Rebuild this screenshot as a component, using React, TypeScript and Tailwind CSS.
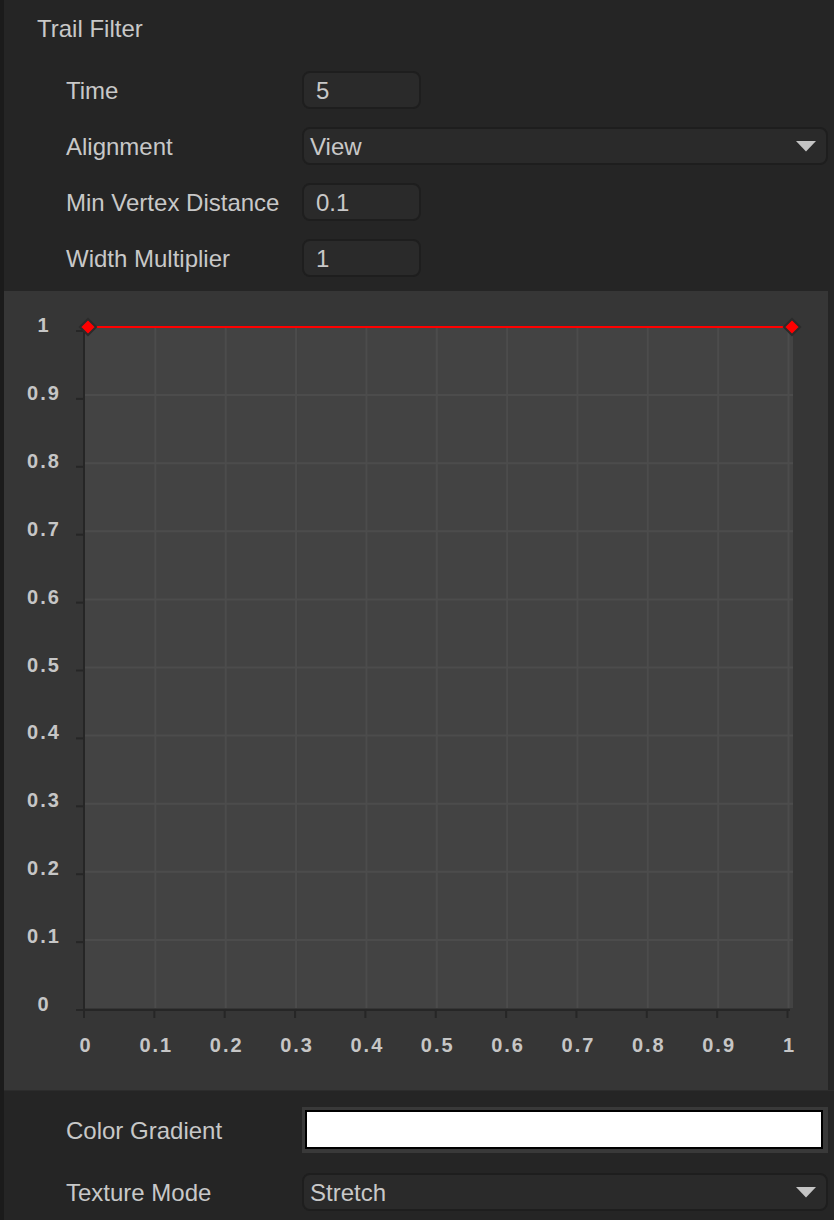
import React from 'react';

const fields = [
    { label: 'Time', value: '5', kind: 'number' },
    { label: 'Alignment', value: 'View', kind: 'select' },
    { label: 'Min Vertex Distance', value: '0.1', kind: 'number' },
    { label: 'Width Multiplier', value: '1', kind: 'number' },
];

const X0 = 85;
const XSTEP = 70.35;
const Y0 = 1008;
const YSTEP = 68.1;
const ticks = [0, 1, 2, 3, 4, 5, 6, 7, 8, 9, 10];
const tickLabel = (i: number) => (i === 0 ? '0' : i === 10 ? '1' : `0.${i}`);

function Caret() {
    return (
        <svg width="20" height="11" viewBox="0 0 20 11" className="shrink-0">
            <path d="M0 0 H20 L10 10.5 Z" fill="#c4c4c4" />
        </svg>
    );
}

function NumberField({ value }: { value: string }) {
    return (
        <div className="flex h-[38px] w-[119px] items-center rounded-[8px] border-2 border-[#1e1e1e] bg-[#2a2a2a] pl-[12px] pt-[1px]">
            {value}
        </div>
    );
}

function SelectField({ value }: { value: string }) {
    return (
        <div className="flex h-[38px] w-[526px] items-center justify-between rounded-[8px] border-2 border-[#1e1e1e] bg-[#2a2a2a] pl-[6px] pr-[10px]">
            <span className="pt-[1px]">{value}</span>
            <Caret />
        </div>
    );
}

function Row({ label, children, height }: { label: string; children: React.ReactNode; height: string }) {
    return (
        <div className={`flex items-center ${height}`}>
            <div className="w-[236px] shrink-0 pt-[1px]">{label}</div>
            {children}
        </div>
    );
}

function Diamond({ x, y }: { x: number; y: number }) {
    return (
        <path
            d={`M${x} ${y - 8} L${x + 8} ${y} L${x} ${y + 8} L${x - 8} ${y} Z`}
            fill="#ff0000"
            stroke="#2b2b2b"
            strokeWidth="2"
        />
    );
}

function CurveChart() {
    const font = "'Liberation Sans', Arial, sans-serif";
    return (
        <svg width="824" height="799" viewBox="4 291 824 799" className="block">
            <rect x="4" y="291" width="824" height="799" fill="#363636" />
            <rect x="85" y="327" width="708" height="681" fill="#434343" />
            {ticks.slice(1).map((i) => (
                <line
                    key={`v${i}`}
                    x1={X0 + i * XSTEP}
                    y1="327"
                    x2={X0 + i * XSTEP}
                    y2={Y0}
                    stroke="#4c4c4c"
                    strokeWidth="2"
                />
            ))}
            {ticks.slice(1, 10).map((i) => (
                <line
                    key={`h${i}`}
                    x1="85"
                    y1={Y0 - i * YSTEP}
                    x2="793"
                    y2={Y0 - i * YSTEP}
                    stroke="#4c4c4c"
                    strokeWidth="2"
                />
            ))}
            <line x1="84" y1="330" x2="84" y2="1018" stroke="#262626" strokeWidth="2" />
            <line x1="76" y1="1010" x2="790" y2="1010" stroke="#262626" strokeWidth="2" />
            {ticks.map((i) => (
                <g key={`t${i}`}>
                    <line x1="76" y1={1010 - i * 67.9} x2="84" y2={1010 - i * 67.9} stroke="#262626" strokeWidth="2" />
                    <line
                        x1={X0 - 1 + i * XSTEP}
                        y1="1010"
                        x2={X0 - 1 + i * XSTEP}
                        y2="1018"
                        stroke="#262626"
                        strokeWidth="2"
                    />
                    <text
                        x="44"
                        y={1010 - i * 67.9}
                        dy="1"
                        textAnchor="middle"
                        fill="#c6c6c6"
                        fontSize="20"
                        fontWeight="bold"
                        letterSpacing="2"
                        fontFamily={font}
                    >
                        {tickLabel(i)}
                    </text>
                    <text
                        x={X0 + i * XSTEP + 1}
                        y="1052"
                        textAnchor="middle"
                        fill="#c6c6c6"
                        fontSize="20"
                        fontWeight="bold"
                        letterSpacing="2"
                        fontFamily={font}
                    >
                        {tickLabel(i)}
                    </text>
                </g>
            ))}
            <line x1="88" y1="327" x2="792" y2="327" stroke="#ff0000" strokeWidth="2" />
            <Diamond x={88} y={327} />
            <Diamond x={792} y={327} />
        </svg>
    );
}

export default function App() {
    return (
        <div className="flex h-[1220px] w-[834px] bg-[#252525] font-['Liberation_Sans',Arial,sans-serif] text-[24px] leading-none text-[#c8c8c8]">
            <div className="w-[4px] shrink-0 bg-[#1b1b1b]" />
            <div className="flex flex-1 flex-col">
                <div className="h-[291px] pl-[33px] pt-[15px]">
                    <div className="h-[27px] leading-[27px]">Trail Filter</div>
                    <div className="mt-[29px] flex flex-col gap-[18px] pl-[29px]">
                        {fields.map((f) => (
                            <Row key={f.label} label={f.label} height="h-[38px]">
                                {f.kind === 'select' ? (
                                    <SelectField value={f.value} />
                                ) : (
                                    <NumberField value={f.value} />
                                )}
                            </Row>
                        ))}
                    </div>
                </div>

                <CurveChart />

                <div className="flex flex-1 flex-col gap-[20px] border-t border-[#2c2c2c] pl-[62px] pt-[16px]">
                    <Row label="Color Gradient" height="h-[46px]">
                        <div className="h-[46px] w-[526px] bg-[#393939] pb-[4px] pl-[3px] pr-[5px] pt-[3px]">
                            <div className="h-full w-full border-2 border-black bg-white" />
                        </div>
                    </Row>
                    <Row label="Texture Mode" height="h-[38px]">
                        <SelectField value="Stretch" />
                    </Row>
                </div>
            </div>
        </div>
    );
}
